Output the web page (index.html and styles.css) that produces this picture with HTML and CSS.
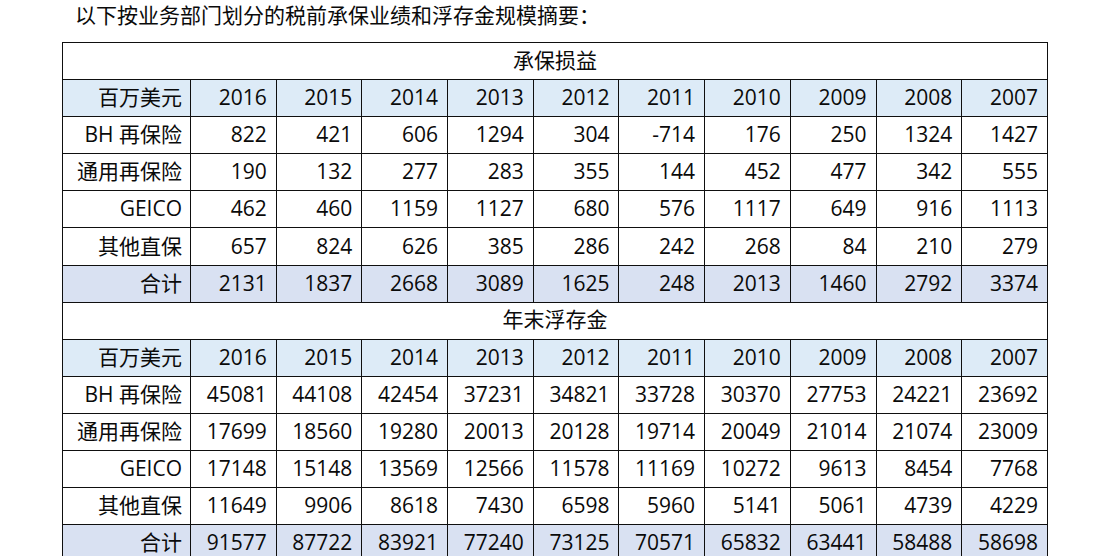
FILE: index.html
```html
<!DOCTYPE html>
<html lang="zh-CN">
<head>
<meta charset="utf-8">
<title>承保损益与浮存金</title>
<link rel="stylesheet" href="styles.css">
</head>
<body>
<p class="intro">以下按业务部门划分的税前承保业绩和浮存金规模摘要：</p>
<table class="data">
  <colgroup>
    <col class="c-label">
    <col><col><col><col><col><col><col><col><col><col>
  </colgroup>
  <tbody>
    <tr class="section"><td colspan="11">承保损益</td></tr>
    <tr class="head"><td>百万美元</td><td>2016</td><td>2015</td><td>2014</td><td>2013</td><td>2012</td><td>2011</td><td>2010</td><td>2009</td><td>2008</td><td>2007</td></tr>
    <tr><td>BH 再保险</td><td>822</td><td>421</td><td>606</td><td>1294</td><td>304</td><td>-714</td><td>176</td><td>250</td><td>1324</td><td>1427</td></tr>
    <tr><td>通用再保险</td><td>190</td><td>132</td><td>277</td><td>283</td><td>355</td><td>144</td><td>452</td><td>477</td><td>342</td><td>555</td></tr>
    <tr><td>GEICO</td><td>462</td><td>460</td><td>1159</td><td>1127</td><td>680</td><td>576</td><td>1117</td><td>649</td><td>916</td><td>1113</td></tr>
    <tr><td>其他直保</td><td>657</td><td>824</td><td>626</td><td>385</td><td>286</td><td>242</td><td>268</td><td>84</td><td>210</td><td>279</td></tr>
    <tr class="total"><td>合计</td><td>2131</td><td>1837</td><td>2668</td><td>3089</td><td>1625</td><td>248</td><td>2013</td><td>1460</td><td>2792</td><td>3374</td></tr>
    <tr class="section"><td colspan="11">年末浮存金</td></tr>
    <tr class="head"><td>百万美元</td><td>2016</td><td>2015</td><td>2014</td><td>2013</td><td>2012</td><td>2011</td><td>2010</td><td>2009</td><td>2008</td><td>2007</td></tr>
    <tr><td>BH 再保险</td><td>45081</td><td>44108</td><td>42454</td><td>37231</td><td>34821</td><td>33728</td><td>30370</td><td>27753</td><td>24221</td><td>23692</td></tr>
    <tr><td>通用再保险</td><td>17699</td><td>18560</td><td>19280</td><td>20013</td><td>20128</td><td>19714</td><td>20049</td><td>21014</td><td>21074</td><td>23009</td></tr>
    <tr><td>GEICO</td><td>17148</td><td>15148</td><td>13569</td><td>12566</td><td>11578</td><td>11169</td><td>10272</td><td>9613</td><td>8454</td><td>7768</td></tr>
    <tr><td>其他直保</td><td>11649</td><td>9906</td><td>8618</td><td>7430</td><td>6598</td><td>5960</td><td>5141</td><td>5061</td><td>4739</td><td>4229</td></tr>
    <tr class="total"><td>合计</td><td>91577</td><td>87722</td><td>83921</td><td>77240</td><td>73125</td><td>70571</td><td>65832</td><td>63441</td><td>58488</td><td>58698</td></tr>
  </tbody>
</table>
</body>
</html>
```

FILE: styles.css
```css
html, body {
  margin: 0;
  padding: 0;
  background: #ffffff;
}

body {
  font-family: "Open Sans", "Noto Sans CJK SC", sans-serif;
  font-size: 21px;
  color: #0a0a0a;
}

.intro {
  margin: 0;
  padding: 1px 0 0 75px;
  height: 42px;
  box-sizing: border-box;
  line-height: 28px;
}

.data {
  margin-left: 62px;
  border-collapse: collapse;
  table-layout: fixed;
  width: 985px;
}

.data col {
  width: 85.7px;
}

.data col.c-label {
  width: 128px;
}

.data tr {
  height: 37.1px;
}

.data td {
  border: 1px solid #0f0f0f;
  padding: 0 9px 1px 4px;
  text-align: right;
  vertical-align: middle;
  line-height: 1;
  white-space: nowrap;
}

.data td:first-child {
  padding-right: 8px;
}

.data tr.section td {
  text-align: center;
  padding: 0 0 2px;
}

.data tr.head td {
  background: #ddebf7;
}

.data tr.total td {
  background: #d9e1f2;
}
```
